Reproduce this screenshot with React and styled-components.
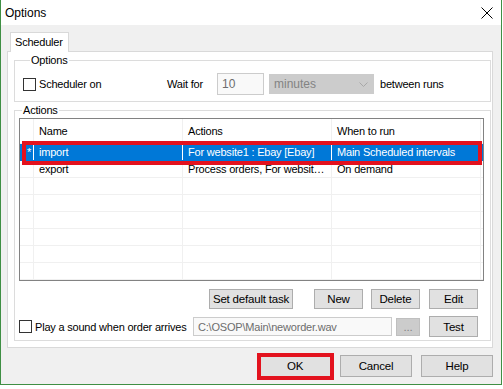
import styled, { createGlobalStyle } from "styled-components";

const GlobalStyle = createGlobalStyle`
  html, body {
    margin: 0;
    padding: 0;
    background: #ffffff;
  }
  body {
    font-family: "Liberation Sans", Arial, sans-serif;
    font-size: 11px;
    color: #000;
  }
`;

const Window = styled.div`
  width: 500px;
  border-left: 1px solid #3f8f44;
  border-right: 1px solid #3f8f44;
  border-bottom: 1px solid #3f8f44;
  background: #f0f0f0;
`;

const TitleBar = styled.div`
  height: 25px;
  background: #ffffff;
  display: flex;
  align-items: center;
  justify-content: space-between;
  padding: 0 8px 0 4px;
`;

const Title = styled.span`
  font-size: 12px;
`;

const CloseIcon = styled.svg`
  width: 12px;
  height: 12px;
  display: block;
`;

const Body = styled.div`
  padding: 7px 8px 7px 6px;
`;

const TabStrip = styled.div`
  display: flex;
  padding-left: 3px;
`;

const Tab = styled.div`
  width: 59px;
  height: 20px;
  box-sizing: border-box;
  padding: 3px 0 0 4px;
  background: #ffffff;
  border: 1px solid #d9d9d9;
  border-bottom: none;
  margin-bottom: -1px;
  position: relative;
  z-index: 1;
  letter-spacing: -0.2px;
`;

const TabPanel = styled.div`
  background: #ffffff;
  border: 1px solid #d9d9d9;
  padding: 2px 0 6px 6px;
`;

const Group = styled.fieldset`
  width: 477px;
  box-sizing: border-box;
  margin: ${(p) => (p.$first ? "0" : "2px 0 0 0")};
  padding: ${(p) => p.$pad};
  border: 1px solid #dcdcdc;
  min-width: 0;
`;

const Legend = styled.legend`
  padding: 0 1px;
  margin-left: 7px;
  line-height: 13px;
  height: 13px;
  letter-spacing: -0.2px;
`;

const Row = styled.div`
  display: flex;
  align-items: center;
  height: ${(p) => p.$h}px;
  margin-top: ${(p) => p.$mt || 0}px;
  justify-content: ${(p) => (p.$end ? "flex-end" : "flex-start")};
  padding-right: ${(p) => p.$pr || 0}px;
  padding-left: ${(p) => p.$pl || 0}px;
`;

const CheckField = styled.label`
  display: flex;
  align-items: center;
  gap: 3px;
  width: ${(p) => p.$w}px;
  flex: none;
  letter-spacing: -0.2px;
  white-space: nowrap;
`;

const CheckBox = styled.span`
  width: 13px;
  height: 13px;
  box-sizing: border-box;
  border: 1px solid #333333;
  background: #ffffff;
  flex: none;
`;

const Text = styled.span`
  width: ${(p) => (p.$w ? `${p.$w}px` : "auto")};
  flex: none;
  letter-spacing: -0.2px;
  white-space: nowrap;
`;

const TextBox = styled.div`
  width: ${(p) => p.$w}px;
  height: ${(p) => p.$h}px;
  box-sizing: border-box;
  border: 1px solid #cccccc;
  background: #f9f9f9;
  color: #6d6d6d;
  display: flex;
  align-items: center;
  padding-left: 4px;
  margin-right: ${(p) => p.$mr || 0}px;
  flex: none;
  font-size: ${(p) => p.$fs || 11}px;
  letter-spacing: ${(p) => p.$ls || 0}px;
  white-space: nowrap;
`;

const Select = styled.div`
  width: 105px;
  height: 20px;
  box-sizing: border-box;
  border: 1px solid #cccccc;
  background: #cccccc;
  color: #838383;
  display: flex;
  align-items: center;
  justify-content: space-between;
  padding: 0 5px 0 4px;
  margin-right: 6px;
  flex: none;
  font-size: 12px;
`;

const Chevron = styled.svg`
  width: 9px;
  height: 5px;
  display: block;
`;

const Grid = styled.div`
  position: relative;
  margin-left: 4px;
  width: 465px;
  box-sizing: border-box;
  border: 1px solid #828282;
  background: #ffffff;
`;

const GridRow = styled.div`
  display: grid;
  grid-template-columns: 14px 149px 149px 149px 2px;
  height: ${(p) => (p.$header ? 25 : 17)}px;
  box-sizing: border-box;
  border-bottom: 1px solid ${(p) => (p.$selected ? "#0078d7" : "#f0f0f0")};
  background: ${(p) => (p.$selected ? "#0078d7" : "#ffffff")};
  color: ${(p) => (p.$selected ? "#ffffff" : "#000000")};
`;

const Cell = styled.div`
  border-right: 1px solid ${(p) => (p.$light ? "#ffffff" : "#f0f0f0")};
  padding-left: ${(p) => (p.$marker ? 7 : 5)}px;
  display: flex;
  align-items: center;
  overflow: hidden;
  white-space: nowrap;
  letter-spacing: -0.2px;
`;

const Filler = styled.div``;

const Marker = styled.div`
  position: absolute;
  left: 2px;
  top: 22px;
  width: 460px;
  height: 24px;
  box-sizing: border-box;
  border: 4px solid #e3121e;
  pointer-events: none;
`;

const Button = styled.div`
  width: ${(p) => p.$w}px;
  height: ${(p) => p.$h || 20}px;
  margin-left: ${(p) => p.$ml || 0}px;
  box-sizing: border-box;
  border: 1px solid ${(p) => (p.$disabled ? "#bfbfbf" : "#adadad")};
  background: ${(p) => (p.$disabled ? "#cccccc" : "#e1e1e1")};
  color: ${(p) => (p.$disabled ? "#838383" : "#000000")};
  display: flex;
  align-items: center;
  justify-content: center;
  flex: none;
  font-size: 11.5px;
  letter-spacing: -0.2px;
  white-space: nowrap;
`;

const DialogButtons = styled.div`
  display: flex;
  justify-content: flex-end;
  margin-top: 7px;
  height: 22px;
`;

const Highlight = styled.div`
  position: relative;
`;

const HighlightRing = styled.div`
  position: absolute;
  left: -2px;
  top: -2px;
  right: -3px;
  bottom: -3px;
  border: 4px solid #e3121e;
`;

const columns = [
  { key: "name", label: "Name" },
  { key: "actions", label: "Actions" },
  { key: "when", label: "When to run" },
];

const tasks = [
  { name: "import", actions: "For website1 : Ebay [Ebay]", when: "Main Scheduled intervals", selected: true },
  { name: "export", actions: "Process orders, For websit…", when: "On demand" },
  {},
  {},
  {},
  {},
  {},
  {},
];

function App() {
  return (
    <>
      <GlobalStyle />
      <Window>
        <TitleBar>
          <Title>Options</Title>
          <CloseIcon viewBox="0 0 12 12">
            <path d="M0.5 0.5 L11.5 11.5 M11.5 0.5 L0.5 11.5" stroke="#000" strokeWidth="1" fill="none" />
          </CloseIcon>
        </TitleBar>
        <Body>
          <TabStrip>
            <Tab>Scheduler</Tab>
          </TabStrip>
          <TabPanel>
            <Group $first $pad="6px 0 6px 8px">
              <Legend>Options</Legend>
              <Row $h={22}>
                <CheckField $w={144}>
                  <CheckBox />
                  Scheduler on
                </CheckField>
                <Text $w={50}>Wait for</Text>
                <TextBox $w={47} $h={22} $mr={5} $fs={12}>
                  10
                </TextBox>
                <Select>
                  minutes
                  <Chevron viewBox="0 0 9 5">
                    <path d="M0.5 0.5 L4.5 4.5 L8.5 0.5" stroke="#a8a8a8" fill="none" />
                  </Chevron>
                </Select>
                <Text>between runs</Text>
              </Row>
            </Group>
            <Group $pad="1px 0 2px 0">
              <Legend>Actions</Legend>
              <Grid>
                <GridRow $header>
                  <Cell />
                  {columns.map((c) => (
                    <Cell key={c.key}>{c.label}</Cell>
                  ))}
                  <Filler />
                </GridRow>
                {tasks.map((t, i) => (
                  <GridRow key={i} $selected={t.selected}>
                    <Cell $light={t.selected} $marker>
                      {t.selected ? "*" : ""}
                    </Cell>
                    <Cell $light={t.selected}>{t.name}</Cell>
                    <Cell $light={t.selected}>{t.actions}</Cell>
                    <Cell>{t.when}</Cell>
                    <Filler />
                  </GridRow>
                ))}
                <Marker />
              </Grid>
              <Row $h={20} $mt={8} $end $pr={12}>
                <Button $w={84}>Set default task</Button>
                <Button $w={49} $ml={21}>
                  New
                </Button>
                <Button $w={49} $ml={8}>
                  Delete
                </Button>
                <Button $w={49} $ml={9}>
                  Edit
                </Button>
              </Row>
              <Row $h={23} $mt={6} $pl={4}>
                <CheckField $w={174}>
                  <CheckBox />
                  Play a sound when order arrives
                </CheckField>
                <TextBox $w={199} $h={19} $fs={11} $ls={-0.2}>
                  C:\OSOP\Main\neworder.wav
                </TextBox>
                <Button $w={24} $h={18} $ml={4} $disabled>
                  ...
                </Button>
                <Button $w={49} $h={21} $ml={9}>
                  Test
                </Button>
              </Row>
            </Group>
          </TabPanel>
          <DialogButtons>
            <Highlight>
              <Button $w={72} $h={22}>
                OK
              </Button>
              <HighlightRing />
            </Highlight>
            <Button $w={72} $h={22} $ml={9}>
              Cancel
            </Button>
            <Button $w={72} $h={22} $ml={9}>
              Help
            </Button>
          </DialogButtons>
        </Body>
      </Window>
    </>
  );
}

export default App;
